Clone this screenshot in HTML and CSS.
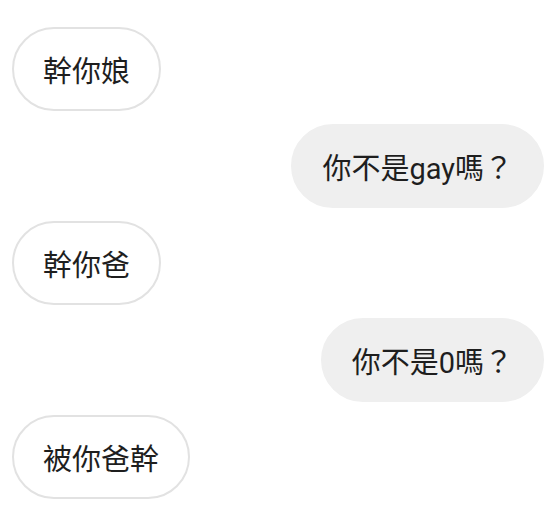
FILE: index.html
```html
<!DOCTYPE html>
<html lang="zh-Hant">
<head>
    <meta charset="UTF-8">
    <meta name="viewport" content="width=device-width, initial-scale=1.0">
    <title>Chat</title>
    <link rel="stylesheet" href="styles.css">
</head>
<body>
    <div class="chat">
        <div class="msg msg-in">幹你娘</div>
        <div class="msg msg-out">你不是gay嗎？</div>
        <div class="msg msg-in">幹你爸</div>
        <div class="msg msg-out">你不是0嗎？</div>
        <div class="msg msg-in">被你爸幹</div>
    </div>
</body>
</html>
```

FILE: styles.css
```css
body {
    margin: 0;
    background-color: #fff;
    font-family: Roboto, "Noto Sans CJK TC", sans-serif;
    color: #1e1e1e;
}

.chat {
    display: flex;
    flex-direction: column;
    gap: 13px;
    padding: 27px 8px 0 12px;
}

.msg {
    display: flex;
    align-items: center;
    height: 84px;
    box-sizing: border-box;
    padding: 0 29px;
    font-size: 29px;
    border-radius: 42px;
    white-space: nowrap;
}

.msg-in {
    align-self: flex-start;
    border: 2px solid #e2e2e2;
    background-color: #fff;
}

.msg-out {
    align-self: flex-end;
    background-color: #efefef;
    border: 2px solid #efefef;
}
```
